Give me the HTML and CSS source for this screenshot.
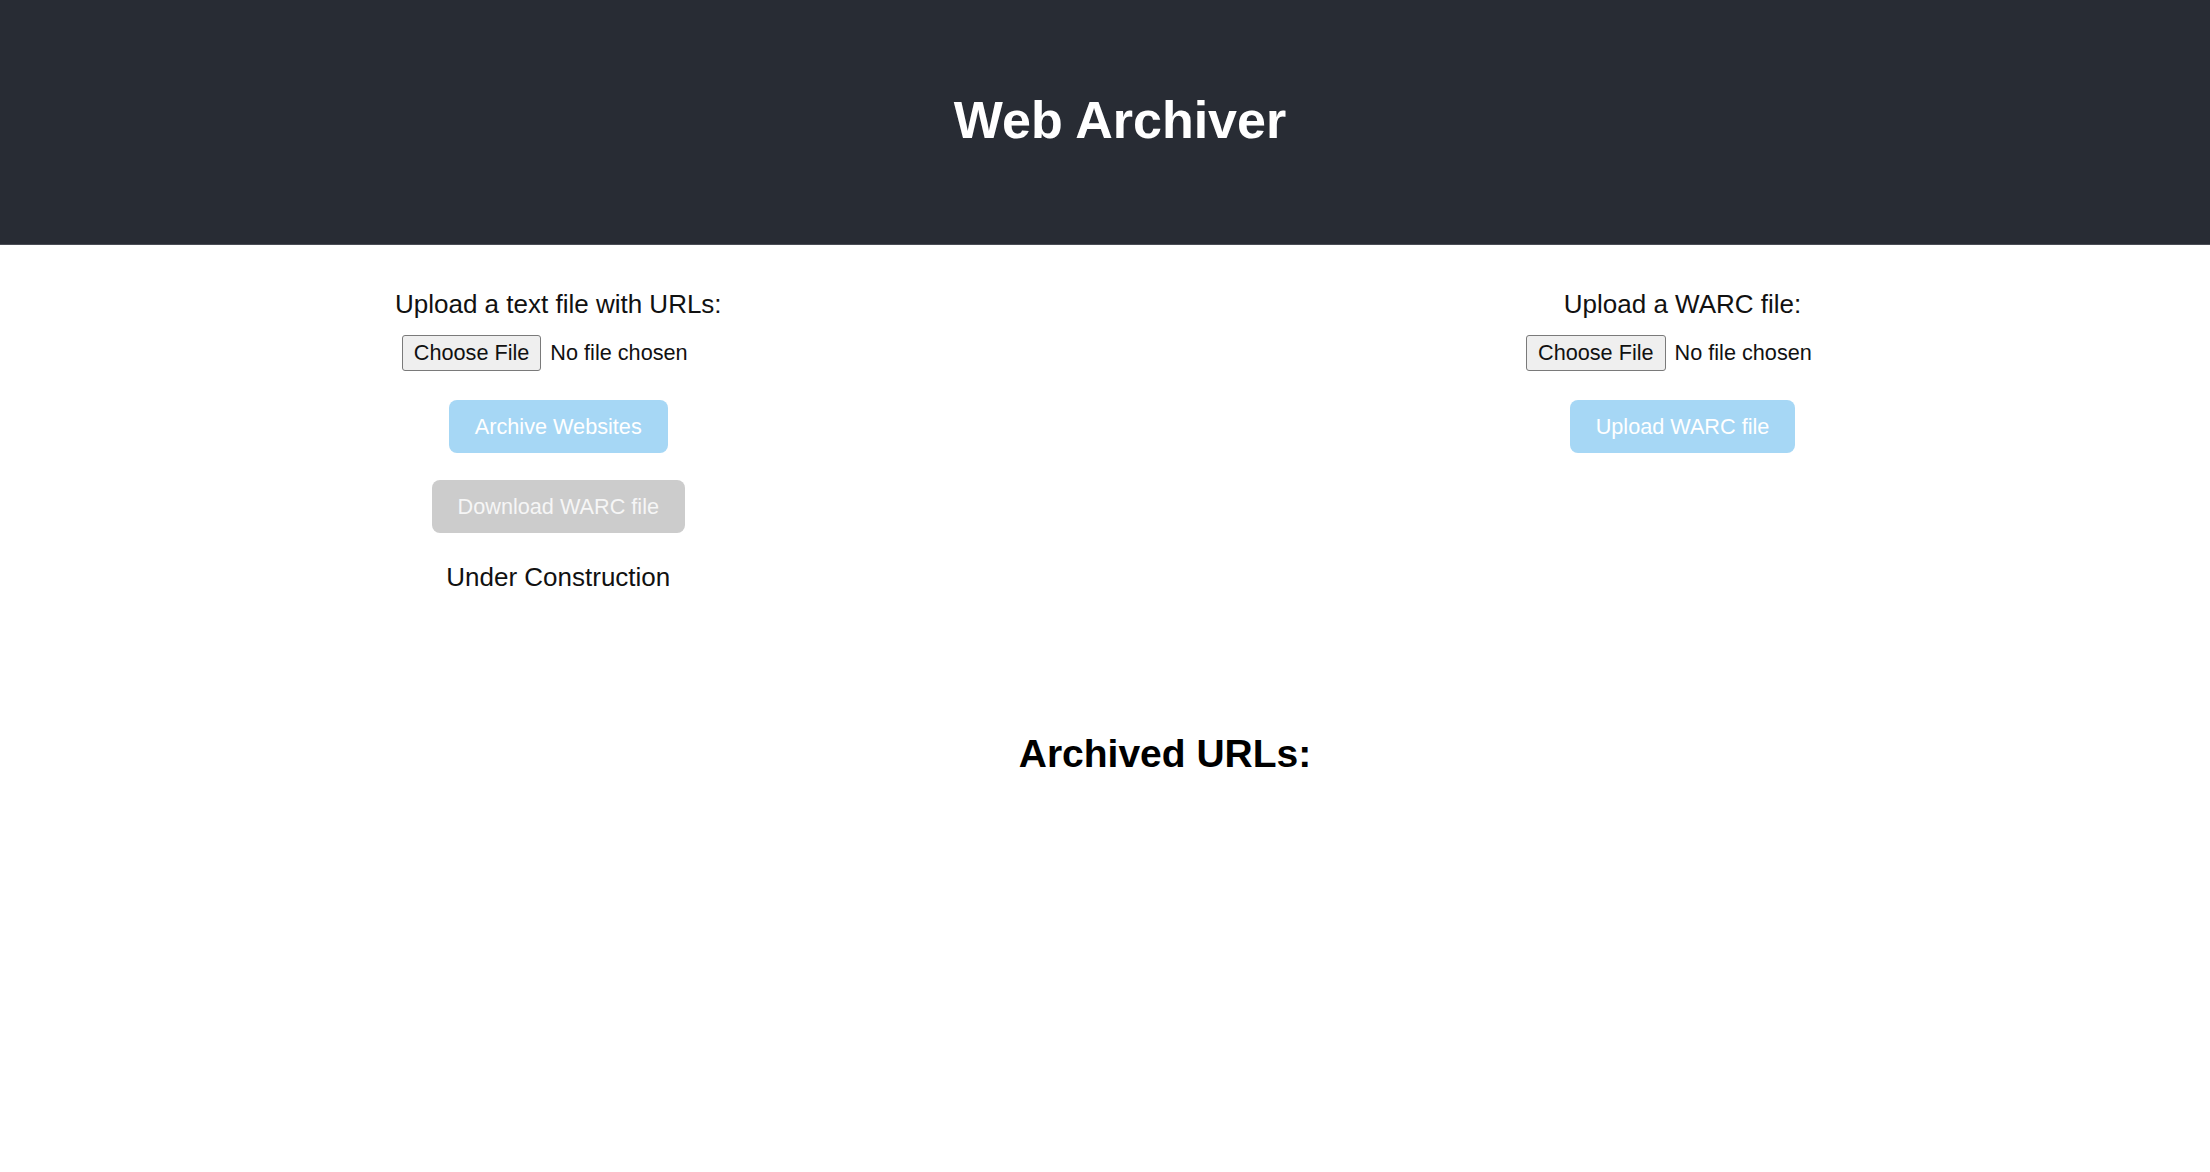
FILE: index.html
```html
<!DOCTYPE html>
<html lang="en">
<head>
<meta charset="utf-8">
<title>Web Archiver</title>
<link rel="stylesheet" href="styles.css">
</head>
<body>
<div class="app">
  <header class="app-header">
    <h1 class="title">Web Archiver</h1>
  </header>
  <main class="panels">
    <section class="panel">
      <label class="panel-label" for="urls">Upload a text file with URLs:</label>
      <input class="file-input" id="urls" type="file" accept=".txt">
      <button class="btn btn-blue" type="button">Archive Websites</button>
      <button class="btn btn-gray btn-download" type="button">Download WARC file</button>
      <p class="note">Under Construction</p>
    </section>
    <section class="panel">
      <label class="panel-label" for="warc">Upload a WARC file:</label>
      <input class="file-input" id="warc" type="file" accept=".warc">
      <button class="btn btn-blue" type="button">Upload WARC file</button>
    </section>
  </main>
  <section class="archived">
    <h2 class="archived-title">Archived URLs:</h2>
  </section>
</div>
</body>
</html>
```
FILE: styles.css
```css
html, body {
  margin: 0;
  padding: 0;
  background: #ffffff;
}

body {
  font-family: "Liberation Sans", Arial, sans-serif;
  color: #111111;
}

.app-header {
  height: 245px;
  box-sizing: border-box;
  background: #282c34;
  border-bottom: 1px solid #4a4d55;
  display: flex;
  align-items: center;
  justify-content: center;
  padding-left: 30px;
  padding-bottom: 5px;
}

.title {
  margin: 0;
  font-size: 52px;
  line-height: 60px;
  font-weight: 700;
  color: #ffffff;
}

.panels {
  display: flex;
  justify-content: space-between;
  align-items: flex-start;
  padding: 44px 371px 0 395px;
}

.panel {
  display: flex;
  flex-direction: column;
  align-items: center;
}

.panel-label {
  font-size: 26px;
  line-height: 30px;
  color: #111111;
}

.file-input {
  margin-top: 16px;
  width: 313px;
  height: 36px;
  font-family: "Liberation Sans", Arial, sans-serif;
  font-size: 21.67px;
  color: #111111;
}

.file-input::file-selector-button {
  font: inherit;
  color: #111111;
  height: 36px;
  padding: 0 11px;
  margin-right: 9px;
  border: 1.6px solid #7a7a7a;
  border-radius: 3px;
  background: #efefef;
}

.btn {
  font-family: "Liberation Sans", Arial, sans-serif;
  font-size: 21.67px;
  line-height: 25px;
  padding: 14px 26px;
  border: none;
  border-radius: 8px;
  color: #ffffff;
  margin-top: 29px;
}

.btn-blue {
  background: #a6d7f5;
}

.btn-gray {
  background: #cccccc;
  color: #f6f6f6;
}

.btn-download {
  margin-top: 27px;
}

.note {
  margin: 29px 0 0;
  font-size: 26px;
  line-height: 30px;
  color: #111111;
}

.archived {
  padding-top: 139px;
  padding-left: 120px;
  text-align: center;
}

.archived-title {
  margin: 0;
  font-size: 39px;
  line-height: 45px;
  font-weight: 700;
  color: #000000;
}
```
